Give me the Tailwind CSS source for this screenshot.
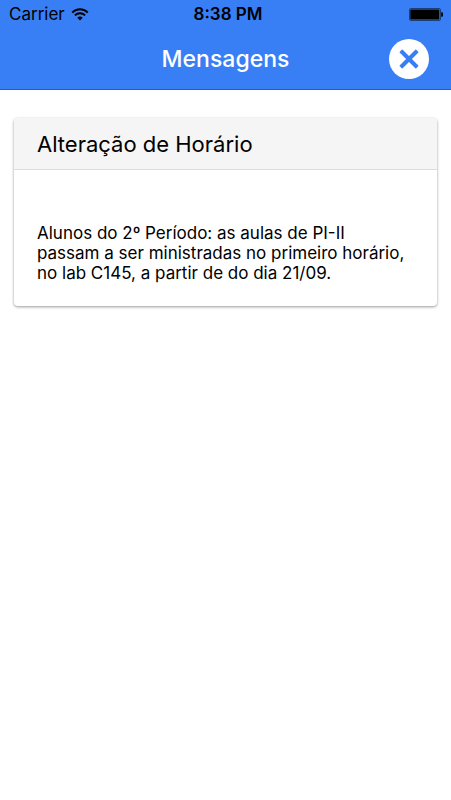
<!DOCTYPE html>
<html lang="pt-BR">
<head>
  <meta charset="UTF-8">
  <meta name="viewport" content="width=device-width, initial-scale=1.0">
  <title>Mensagens</title>
  <script src="https://cdn.jsdelivr.net/npm/@tailwindcss/browser@4"></script>
</head>
<body class="min-h-screen bg-white font-['Inter',sans-serif] text-black">

  <!-- Cabeçalho -->
  <header class="bg-[#387ef5] border-b border-[#0c60ee]">
    <!-- Barra de status -->
    <div class="grid grid-cols-[1fr_auto_1fr] items-center h-[29px] pl-[9px] pr-2 text-[17px]">
      <div class="flex items-center gap-[6px]">
        <span>Carrier</span>
        <svg class="w-[18px] h-[13px]" viewBox="0 0 17 13" fill="none" stroke="black" stroke-width="2">
          <path d="M.7 4.6a11 11 0 0 1 15.6 0M3.4 7.4a7.2 7.2 0 0 1 10.2 0"/>
          <path d="M8.5 12.5 5.8 9.8a3.8 3.8 0 0 1 5.4 0z" fill="black" stroke="none"/>
        </svg>
      </div>
      <span class="pl-1 text-center font-semibold">8:38 PM</span>
      <svg class="justify-self-end w-[34px] h-[13px]" viewBox="0 0 34 13">
        <rect x=".5" y=".5" width="31" height="12" rx="1.5" fill="none" stroke="#1b3f7b"/>
        <rect x="1.3" y="1.5" width="29" height="10" rx=".5"/>
        <path d="M32.2 4.2h.6q1.2 0 1.2 1.2v2.2q0 1.2-1.2 1.2h-.6z"/>
      </svg>
    </div>
    <div class="grid grid-cols-[1fr_auto_1fr] items-center h-[60px] px-[22px]">
      <h1 class="col-start-2 text-[23px] font-medium text-white">Mensagens</h1>
      <button type="button" aria-label="Fechar" class="justify-self-end flex items-center justify-center size-10 rounded-full bg-white">
        <svg class="size-5" viewBox="0 0 20 20" fill="#387ef5" stroke="#387ef5" stroke-width="1.4" stroke-linejoin="round">
          <path d="M3.2 1.3 10 8.1l6.8-6.8 1.9 1.9L11.9 10l6.8 6.8-1.9 1.9L10 11.9l-6.8 6.8-1.9-1.9L8.1 10 1.3 3.2z"/>
        </svg>
      </button>
    </div>
  </header>

  <!-- Mensagem -->
  <main class="px-[14px] pt-7">
    <article class="rounded-sm bg-white shadow-[0_1px_3px_rgba(0,0,0,0.4)]">
      <h2 class="px-[23px] pt-[13px] pb-[11px] rounded-t-sm bg-[#f5f5f5] border-b border-[#dddddd] text-[22px] leading-[27px]">Alteração de Horário</h2>
      <p class="pl-[23px] pr-[27px] pt-[53px] pb-[23px] text-[17px] leading-5">Alunos do 2º Período: as aulas de PI-II passam a ser ministradas no primeiro horário, no lab C145, a partir de do dia 21/09.</p>
    </article>
  </main>

</body>
</html>
